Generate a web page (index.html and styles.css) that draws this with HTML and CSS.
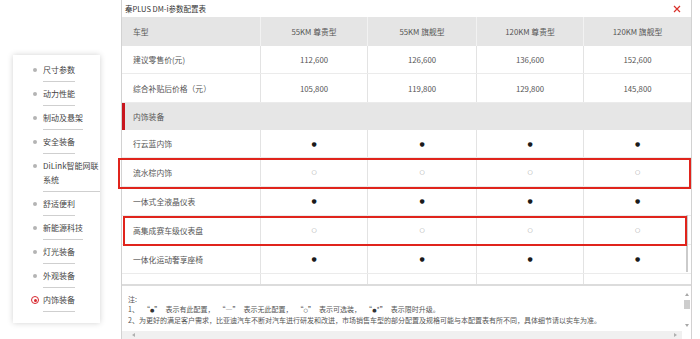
FILE: index.html
```html
<!DOCTYPE html>
<html lang="zh-CN">
<head>
<meta charset="utf-8">
<title>秦PLUS DM-i参数配置表</title>
<link rel="stylesheet" href="styles.css">
</head>
<body>
<div class="page">
  <aside class="side">
    <nav class="card">
      <div class="nav-item"><span class="marker"><i class="dot"></i></span><span class="label">尺寸参数</span></div>
      <div class="nav-item"><span class="marker"><i class="dot"></i></span><span class="label">动力性能</span></div>
      <div class="nav-item"><span class="marker"><i class="dot"></i></span><span class="label">制动及悬架</span></div>
      <div class="nav-item"><span class="marker"><i class="dot"></i></span><span class="label">安全装备</span></div>
      <div class="nav-item"><span class="marker"><i class="dot"></i></span><span class="label">DiLink智能网联系统</span></div>
      <div class="nav-item"><span class="marker"><i class="dot"></i></span><span class="label">舒适便利</span></div>
      <div class="nav-item"><span class="marker"><i class="dot"></i></span><span class="label">新能源科技</span></div>
      <div class="nav-item"><span class="marker"><i class="dot"></i></span><span class="label">灯光装备</span></div>
      <div class="nav-item"><span class="marker"><i class="dot"></i></span><span class="label">外观装备</span></div>
      <div class="nav-item active"><span class="marker"><i class="ring"></i></span><span class="label">内饰装备</span></div>
    </nav>
  </aside>

  <section class="panel">
    <div class="titlebar">
      <span class="title">秦PLUS DM-i参数配置表</span>
      <svg class="close" width="8" height="8" viewBox="0 0 8 8"><path d="M1 1L7 7M7 1L1 7" stroke="#d9302a" stroke-width="1.2" fill="none"/></svg>
    </div>

    <div class="tablewrap">
      <div class="row head">
        <div class="cell">车型</div>
        <div class="cell">55KM 尊贵型</div>
        <div class="cell">55KM 旗舰型</div>
        <div class="cell">120KM 尊贵型</div>
        <div class="cell">120KM 旗舰型</div>
      </div>
      <div class="row row-s">
        <div class="cell">建议零售价(元)</div>
        <div class="cell">112,600</div>
        <div class="cell">126,600</div>
        <div class="cell">136,600</div>
        <div class="cell">152,600</div>
      </div>
      <div class="row">
        <div class="cell">综合补贴后价格（元）</div>
        <div class="cell">105,800</div>
        <div class="cell">119,800</div>
        <div class="cell">129,800</div>
        <div class="cell">145,800</div>
      </div>
      <div class="section">内饰装备</div>
      <div class="row row-s">
        <div class="cell">行云蓝内饰</div>
        <div class="cell"><span class="on">●</span></div>
        <div class="cell"><span class="on">●</span></div>
        <div class="cell"><span class="on">●</span></div>
        <div class="cell"><span class="on">●</span></div>
      </div>
      <div class="row">
        <div class="cell">流水棕内饰</div>
        <div class="cell"><span class="opt">○</span></div>
        <div class="cell"><span class="opt">○</span></div>
        <div class="cell"><span class="opt">○</span></div>
        <div class="cell"><span class="opt">○</span></div>
      </div>
      <div class="row">
        <div class="cell">一体式全液晶仪表</div>
        <div class="cell"><span class="on">●</span></div>
        <div class="cell"><span class="on">●</span></div>
        <div class="cell"><span class="on">●</span></div>
        <div class="cell"><span class="on">●</span></div>
      </div>
      <div class="row">
        <div class="cell">高集成赛车级仪表盘</div>
        <div class="cell"><span class="opt">○</span></div>
        <div class="cell"><span class="opt">○</span></div>
        <div class="cell"><span class="opt">○</span></div>
        <div class="cell"><span class="opt">○</span></div>
      </div>
      <div class="row">
        <div class="cell">一体化运动奢享座椅</div>
        <div class="cell"><span class="on">●</span></div>
        <div class="cell"><span class="on">●</span></div>
        <div class="cell"><span class="on">●</span></div>
        <div class="cell"><span class="on">●</span></div>
      </div>
      <div class="row">
        <div class="cell"></div>
        <div class="cell"></div>
        <div class="cell"></div>
        <div class="cell"></div>
        <div class="cell"></div>
      </div>
      <div class="vthumb"></div>
    </div>

    <div class="notes">
      <div class="notes-body">
        <p>注:</p>
        <p class="legend">1、 “<span class="sym">●</span>” 表示有此配置， “—” 表示无此配置， “<span class="sym">○</span>” 表示可选装， “<span class="sym">●</span>*” 表示限时升级。</p>
        <p>2、为更好的满足客户需求，比亚迪汽车不断对汽车进行研发和改进，市场销售车型的部分配置及规格可能与本配置表有所不同，具体细节请以实车为准。</p>
      </div>
      <div class="vbar"><i class="arr-up"></i><i class="thumb"></i><i class="arr-down"></i></div>
      <div class="hbar"><i class="arr-left"></i><i class="arr-right"></i></div>
      <div class="corner"></div>
    </div>
  </section>

  <div class="mark mark-1"></div>
  <div class="mark mark-2"></div>
</div>
</body>
</html>
```

FILE: styles.css
```css
html, body {
  margin: 0;
  padding: 0;
  background: #fff;
}
body {
  font-family: "Noto Sans CJK SC", "Noto Sans", sans-serif;
  width: 700px;
  height: 339px;
  overflow: hidden;
}
p { margin: 0; }
i { display: block; }

.page {
  position: relative;
  display: flex;
  height: 339px;
}

/* sidebar */
.side {
  width: 121px;
  flex: none;
  box-sizing: border-box;
  padding: 55px 0 0 13px;
}
.card {
  width: 87px;
  height: 268px;
  box-sizing: border-box;
  background: #fff;
  box-shadow: 0 0 6px rgba(0, 0, 0, 0.18);
  padding: 3px 0 0 18px;
}
.nav-item {
  display: flex;
  align-items: flex-start;
  gap: 4px;
}
.marker {
  width: 8px;
  height: 14px;
  margin-top: 5px;
  display: flex;
  align-items: center;
  justify-content: center;
  flex: none;
}
.dot {
  width: 4px;
  height: 4px;
  border-radius: 50%;
  background: #b4b4b4;
}
.ring {
  width: 8px;
  height: 8px;
  box-sizing: border-box;
  border: 1px solid #d7262d;
  border-radius: 50%;
  display: flex;
  align-items: center;
  justify-content: center;
}
.ring::after {
  content: "";
  width: 3px;
  height: 3px;
  border-radius: 50%;
  background: #d7262d;
}
.label {
  font-size: 8px;
  line-height: 14px;
  color: #444;
  padding: 5px 0 4px;
  border-bottom: 1px solid #cfcfcf;
}

/* panel */
.panel {
  width: 571px;
  flex: none;
  height: 339px;
  box-sizing: border-box;
  border-left: 1px solid #d2d2d2;
  border-right: 1px solid #d2d2d2;
  display: flex;
  flex-direction: column;
}
.titlebar {
  height: 17px;
  flex: none;
  display: flex;
  align-items: center;
  justify-content: space-between;
  padding: 0 10px 0 3px;
}
.title {
  font-size: 7.5px;
  color: #333;
}
.close { display: block; }

.tablewrap {
  flex: 1;
  position: relative;
  overflow: hidden;
}
.row {
  display: grid;
  grid-template-columns: 138px 107px 109px 107px 108px;
  height: 29px;
  box-sizing: border-box;
  border-bottom: 1px solid #ebebeb;
}
.row-s { height: 28px; }
.cell {
  display: flex;
  align-items: center;
  justify-content: center;
  font-size: 7.8px;
  color: #555;
  border-left: 1px solid #e3e3e3;
}
.cell:first-child {
  justify-content: flex-start;
  padding-left: 11px;
  border-left: none;
}
.head {
  background: #e5e5e5;
  border-bottom: none;
}
.head .cell {
  border-left-color: #f2f2f2;
  color: #555;
}
.section {
  height: 27px;
  box-sizing: border-box;
  display: flex;
  align-items: center;
  background: #e6e6e6;
  border-left: 3px solid #c8161e;
  padding-left: 8px;
  font-size: 7.8px;
  color: #555;
}
.on, .opt {
  font-family: "DejaVu Sans", sans-serif;
  font-size: 6px;
  line-height: 6px;
}
.on { color: #1b1b1b; }
.opt { color: #999; }
.vthumb {
  position: absolute;
  right: 3px;
  top: 198px;
  width: 2px;
  height: 57px;
  background: #cbcbcb;
}

/* notes */
.notes {
  height: 55px;
  flex: none;
  box-sizing: border-box;
  border-top: 2px solid #dcdcdc;
  display: grid;
  grid-template-columns: 1fr 9px;
  grid-template-rows: 1fr 8px;
}
.notes-body {
  padding: 8px 0 0 6px;
  font-size: 7px;
  line-height: 10px;
  color: #555;
  white-space: nowrap;
  overflow: hidden;
}
.legend {
  word-spacing: 2.5px;
}
.sym {
  font-family: "DejaVu Sans", sans-serif;
  font-size: 5px;
  color: #333;
}
.vbar {
  display: flex;
  flex-direction: column;
  align-items: center;
  padding-top: 7px;
}
.arr-up, .arr-down {
  width: 0;
  height: 0;
  border-left: 2.5px solid transparent;
  border-right: 2.5px solid transparent;
}
.arr-up { border-bottom: 3px solid #a8a8a8; }
.arr-down {
  border-top: 3px solid #a8a8a8;
  margin-top: auto;
  margin-bottom: 4px;
}
.thumb {
  width: 6px;
  height: 9px;
  background: #cdcdcd;
  margin-top: 4px;
}
.hbar {
  background: #f0f0f0;
  display: flex;
  align-items: center;
  justify-content: space-between;
  padding: 0 5px 0 10px;
}
.arr-left, .arr-right {
  width: 0;
  height: 0;
  border-top: 2.5px solid transparent;
  border-bottom: 2.5px solid transparent;
}
.arr-left { border-right: 3px solid #b0b0b0; }
.arr-right { border-left: 3px solid #b0b0b0; }
.corner { background: #fff; }

/* annotation boxes */
.mark {
  position: absolute;
  box-sizing: border-box;
  border: 2px solid #e0241c;
  pointer-events: none;
}
.mark-1 {
  left: 118px;
  top: 158px;
  width: 573px;
  height: 31px;
}
.mark-2 {
  left: 123px;
  top: 216px;
  width: 564px;
  height: 30px;
}
```
